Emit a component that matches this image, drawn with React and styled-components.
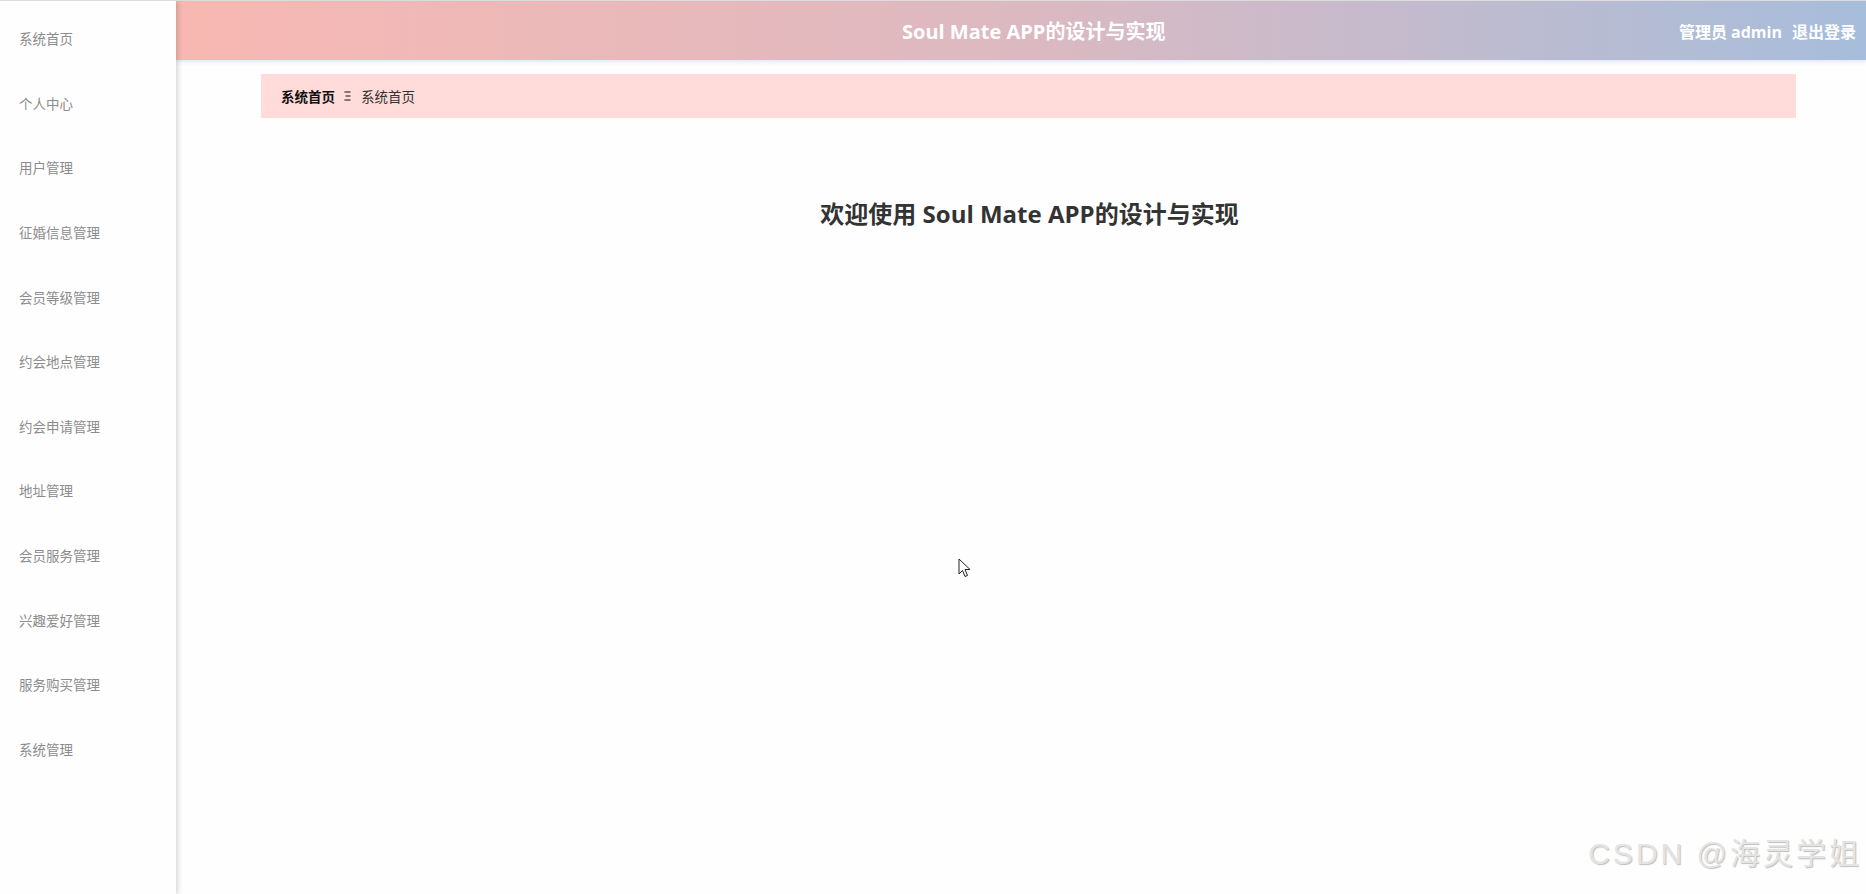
import React from "react";
import styled, { createGlobalStyle } from "styled-components";

const GlobalStyle = createGlobalStyle`
  html, body {
    margin: 0;
    padding: 0;
    background: #fefefe;
  }
  body {
    border-top: 1px solid #dcdcdc;
    font-family: "Open Sans", "Noto Sans CJK SC", sans-serif;
  }
  * {
    box-sizing: border-box;
  }
`;

const Layout = styled.div`
  position: relative;
  display: flex;
  height: 893px;
  overflow: hidden;
`;

const Sidebar = styled.nav`
  width: 176px;
  flex-shrink: 0;
  background: #fefefe;
  padding-top: 5px;
  box-shadow: 2px 0 5px rgba(0, 0, 0, 0.16);
  z-index: 2;
`;

const MenuItem = styled.div`
  height: 64.6px;
  display: flex;
  align-items: center;
  padding-left: 19px;
  font-size: 13.5px;
  color: #8c8c8c;
  cursor: pointer;
`;

const Main = styled.div`
  flex: 1;
  display: flex;
  flex-direction: column;
  min-width: 0;
`;

const Header = styled.header`
  height: 59px;
  display: flex;
  align-items: center;
  justify-content: space-between;
  padding: 0 10px 0 0;
  background: linear-gradient(90deg, #f8b8b2 0%, #dcb9c1 50%, #a6bddb 100%);
  box-shadow: 0 2px 4px rgba(190, 205, 240, 0.45);
  color: #fff;
  position: relative;
`;

const Title = styled.h1`
  margin: 0 0 0 726px;
  font-size: 20px;
  font-weight: 700;
  color: #fff;
`;

const UserBox = styled.div`
  display: flex;
  gap: 10px;
  font-size: 16px;
  font-weight: 700;
`;

const Content = styled.main`
  padding: 14px 70px 0 85px;
`;

const Crumbs = styled.div`
  height: 44px;
  background: #ffdbd9;
  display: flex;
  align-items: center;
  padding-left: 20px;
  font-size: 13.5px;
  color: #222;
`;

const Crumb = styled.span`
  font-weight: ${(p) => (p.strong ? 700 : 400)};
  color: ${(p) => (p.strong ? "#111" : "#333")};
`;

const SepIcon = styled.svg`
  margin: 0 10px 0 9px;
`;

const Welcome = styled.h2`
  margin: 77px 0 0;
  text-align: center;
  font-size: 24px;
  font-weight: 700;
  color: #333;
  padding-left: 2px;
`;

const Watermark = styled.div`
  position: absolute;
  right: 4px;
  bottom: 21px;
  font-family: "Liberation Sans", "Noto Sans CJK SC", sans-serif;
  font-size: 30px;
  letter-spacing: 3px;
  color: #e4e4e4;
  text-shadow: 1px 1px 1px rgba(0, 0, 0, 0.25);
  z-index: 3;
`;

const Cursor = styled.svg`
  position: absolute;
  left: 958px;
  top: 557px;
  z-index: 3;
`;

const menu = [
  "系统首页",
  "个人中心",
  "用户管理",
  "征婚信息管理",
  "会员等级管理",
  "约会地点管理",
  "约会申请管理",
  "地址管理",
  "会员服务管理",
  "兴趣爱好管理",
  "服务购买管理",
  "系统管理",
];

const Separator = () => (
  <SepIcon width="7" height="10" viewBox="0 0 7 10">
    <g stroke="#222" strokeWidth="1.1">
      <line x1="0.5" y1="1" x2="6.5" y2="1" />
      <line x1="1.5" y1="5" x2="6.5" y2="5" />
      <line x1="0.5" y1="9" x2="6.5" y2="9" />
    </g>
  </SepIcon>
);

export default function App() {
  return (
    <>
      <GlobalStyle />
      <Layout>
        <Sidebar>
          {menu.map((m) => (
            <MenuItem key={m}>{m}</MenuItem>
          ))}
        </Sidebar>
        <Main>
          <Header>
            <Title>Soul Mate APP的设计与实现</Title>
            <UserBox>
              <span>管理员 admin</span>
              <span>退出登录</span>
            </UserBox>
          </Header>
          <Content>
            <Crumbs>
              <Crumb strong>系统首页</Crumb>
              <Separator />
              <Crumb>系统首页</Crumb>
            </Crumbs>
            <Welcome>欢迎使用 Soul Mate APP的设计与实现</Welcome>
          </Content>
        </Main>
        <Cursor width="13" height="20" viewBox="0 0 13 20">
          <path
            d="M1 1 L1 16 L4.5 12.5 L7 18.5 L9.5 17.5 L7 11.5 L12 11.5 Z"
            fill="#fff"
            stroke="#222"
            strokeWidth="1"
            strokeLinejoin="round"
          />
        </Cursor>
        <Watermark>CSDN @海灵学姐</Watermark>
      </Layout>
    </>
  );
}
